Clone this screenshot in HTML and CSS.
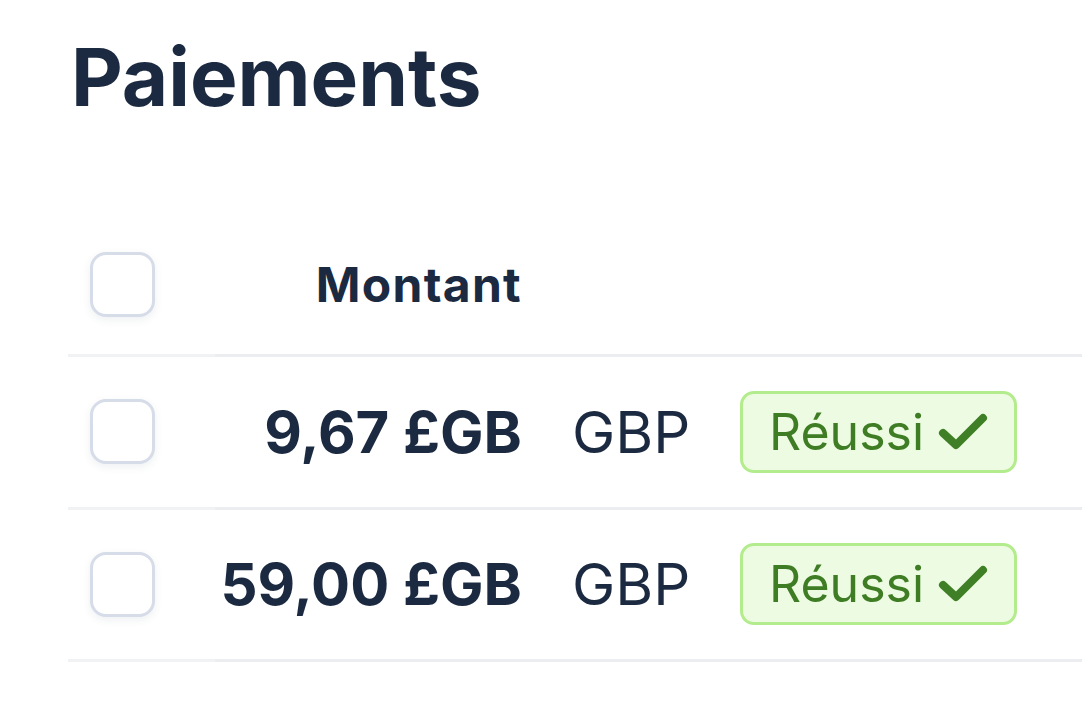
FILE: index.html
```html
<!DOCTYPE html>
<html lang="fr">
<head>
<meta charset="utf-8">
<title>Paiements</title>
<link rel="stylesheet" href="styles.css">
</head>
<body>
<main class="page">
  <h1 class="title">Paiements</h1>
  <table class="payments">
    <thead>
      <tr>
        <th class="col-check"><span class="checkbox"></span></th>
        <th class="col-amount">Montant</th>
        <th class="col-currency"></th>
        <th class="col-status"></th>
      </tr>
    </thead>
    <tbody>
      <tr>
        <td class="col-check"><span class="checkbox"></span></td>
        <td class="col-amount amount">9,67 £GB</td>
        <td class="col-currency">GBP</td>
        <td class="col-status"><span class="badge">Réussi <svg class="badge-icon" viewBox="0 0 52 40" width="52" height="40"><path d="M6 21 L19 33 L46 6" fill="none" stroke="currentColor" stroke-width="8" stroke-linecap="round" stroke-linejoin="round"/></svg></span></td>
      </tr>
      <tr>
        <td class="col-check"><span class="checkbox"></span></td>
        <td class="col-amount amount">59,00 £GB</td>
        <td class="col-currency">GBP</td>
        <td class="col-status"><span class="badge">Réussi <svg class="badge-icon" viewBox="0 0 52 40" width="52" height="40"><path d="M6 21 L19 33 L46 6" fill="none" stroke="currentColor" stroke-width="8" stroke-linecap="round" stroke-linejoin="round"/></svg></span></td>
      </tr>
    </tbody>
  </table>
</main>
</body>
</html>
```

FILE: styles.css
```css
html, body {
  margin: 0;
  padding: 0;
  background: #ffffff;
}

body {
  font-family: Inter, "Noto Sans", sans-serif;
  color: #1b2a41;
  overflow: hidden;
}

.page {
  padding: 28px 0 0 68px;
}

.title {
  margin: 0;
  padding-left: 3px;
  font-size: 80px;
  font-weight: 700;
  line-height: 97px;
  letter-spacing: 0;
}

.payments {
  margin-top: 90px;
  border-collapse: collapse;
  width: 1100px;
}

.payments th,
.payments td {
  padding: 0;
  height: 149.5px;
  vertical-align: middle;
  border-bottom: 3px solid #ebedf0;
}

.payments thead th {
  height: 139px;
}

.col-check {
  width: 125px;
  padding-left: 22px !important;
  text-align: left;
  border-bottom-color: #f0f2f4 !important;
}

.col-amount {
  width: 307px;
  text-align: right;
}

.col-currency {
  width: 168px;
  padding-left: 50px !important;
  text-align: left;
  font-size: 58px;
  font-weight: 400;
}

.col-status {
  text-align: left;
}

.payments th.col-amount {
  font-size: 48px;
  font-weight: 700;
  letter-spacing: 1.3px;
}

.amount {
  font-size: 58px;
  font-weight: 700;
  letter-spacing: 0;
}

.checkbox {
  display: block;
  box-sizing: border-box;
  width: 65px;
  height: 65px;
  border: 3px solid #d6dce8;
  border-radius: 16px;
  background: #ffffff;
  box-shadow: 0 3px 8px rgba(40, 60, 90, 0.08);
}

.badge {
  display: inline-flex;
  align-items: center;
  gap: 13px;
  box-sizing: border-box;
  height: 82px;
  padding: 0 25px 0 26px;
  border: 3px solid #b3ec8c;
  border-radius: 14px;
  background: #edfbe2;
  color: #3f7d25;
  font-size: 50px;
  font-weight: 400;
}

.badge-icon {
  display: block;
  color: #3f7f26;
}
```
